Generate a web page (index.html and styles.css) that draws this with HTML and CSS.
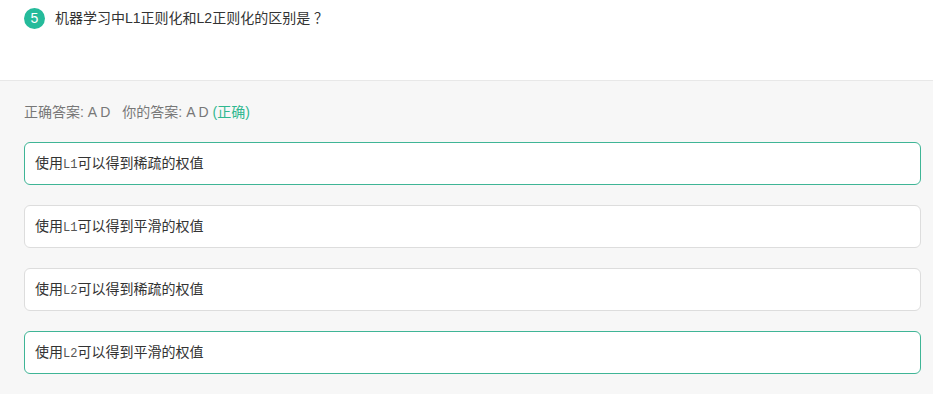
FILE: index.html
```html
<!DOCTYPE html>
<html lang="zh-CN">
<head>
  <meta charset="UTF-8">
  <title>题目 5</title>
  <link rel="stylesheet" href="styles.css">
</head>
<body>
  <div class="question">
    <span class="num">5</span>
    <span class="title">机器学习中L1正则化和L2正则化的区别是 ？</span>
  </div>

  <section class="answer">
    <p class="result">正确答案: A D<span class="gap"></span>你的答案: A D <span class="ok">(正确)</span></p>
    <ul class="options">
      <li class="chosen">使用<code>L1</code>可以得到稀疏的权值</li>
      <li>使用<code>L1</code>可以得到平滑的权值</li>
      <li>使用<code>L2</code>可以得到稀疏的权值</li>
      <li class="chosen">使用<code>L2</code>可以得到平滑的权值</li>
    </ul>
  </section>
</body>
</html>
```

FILE: styles.css
```css
* { margin: 0; padding: 0; box-sizing: border-box; }
body {
  font-family: "Liberation Sans", "Noto Sans CJK SC", sans-serif;
  background: #f7f7f7;
  color: #333;
  font-size: 14px;
}

.question {
  background: #fff;
  height: 81px;
  border-bottom: 1px solid #e8e8e8;
  padding: 8px 24px 0;
  display: flex;
  align-items: flex-start;
  gap: 10px;
}
.question .num {
  width: 21px;
  height: 21px;
  border-radius: 50%;
  background: #25bb9b;
  color: #fff;
  font-size: 14px;
  line-height: 21px;
  text-align: center;
}
.question .title { line-height: 21px; font-size: 14px; color: #333; }

.answer { padding: 20px 12px 0 24px; }
.result { color: #777; font-size: 14px; line-height: 22px; }
.result .gap { display: inline-block; width: 12px; }
.result .ok { color: #2fb890; }

.options { list-style: none; margin-top: 19px; }
.options li {
  height: 43px;
  line-height: 41px;
  padding: 0 10px;
  margin-bottom: 20px;
  background: #fff;
  border: 1px solid #ddd;
  border-radius: 6px;
  font-size: 14px;
  color: #333;
}
.options li.chosen { border-color: #3fb596; }
.options code {
  font-family: "Liberation Mono", "DejaVu Sans Mono", monospace;
  font-size: 12px;
  color: #555;
}
```
